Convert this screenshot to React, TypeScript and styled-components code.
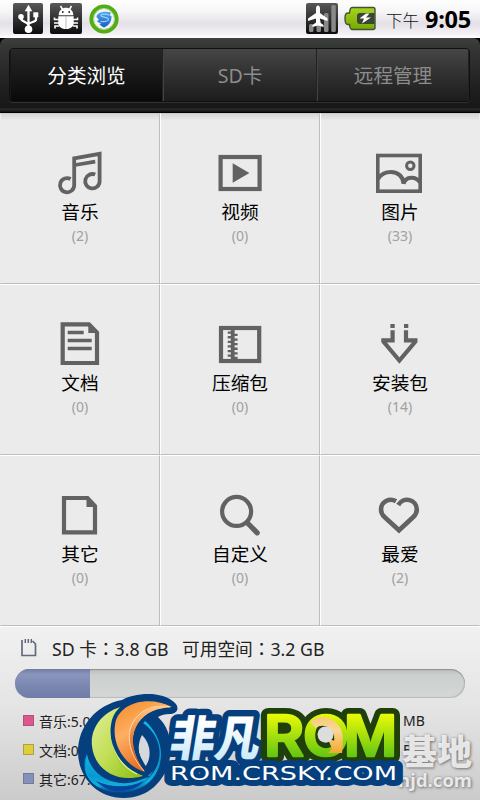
import React, { useState } from "react";
import styled, { createGlobalStyle } from "styled-components";

const GlobalStyle = createGlobalStyle`
  * {
    box-sizing: border-box;
  }
  body {
    margin: 0;
    background: #000;
    font-family: "Noto Sans", "Noto Sans CJK SC", sans-serif;
  }
`;

const Screen = styled.div`
  position: relative;
  width: 480px;
  height: 800px;
  overflow: hidden;
  display: flex;
  flex-direction: column;
  background: #000;
`;

const StatusBar = styled.header`
  height: 38px;
  flex: none;
  display: flex;
  align-items: flex-start;
  padding: 3px 8px 0 13px;
  background: linear-gradient(#fff 0%, #f6f5f7 30%, #e4e1e6 62%, #f3eff4 88%, #fff 100%);
`;

const StatusIcon = styled.svg<{ $gap?: number }>`
  flex: none;
  margin-right: ${(props) => props.$gap ?? 6}px;
`;

const Spacer = styled.div`
  flex: 1;
`;

const Meridiem = styled.span`
  font-family: "Noto Sans CJK SC", sans-serif;
  font-weight: 300;
  font-size: 16.5px;
  line-height: 35px;
  color: #111;
  width: 39px;
`;

const Clock = styled.span`
  font-family: "Open Sans", sans-serif;
  font-weight: 700;
  font-size: 23.5px;
  line-height: 33px;
  letter-spacing: -0.3px;
  color: #000;
  width: 47px;
`;

const TabBar = styled.nav`
  height: 75px;
  flex: none;
  padding: 10px 10px 11px 9px;
  border-radius: 7px 7px 0 0;
  border-bottom: 1px solid #000;
  background: linear-gradient(#3d3f3d 0%, #353735 12%, #262626 50%, #171717 94%, #2b2b2b 96%, #111 100%);
`;

const TabGroup = styled.div`
  display: grid;
  grid-template-columns: 153px 154px 1fr;
  height: 54px;
  border: 1px solid #101010;
  border-radius: 4px;
  overflow: hidden;
  box-shadow: 0 1px 0 #303030;
`;

const Tab = styled.button<{ $active: boolean }>`
  padding: 0 0 1px;
  border: 0;
  border-left: 1px solid ${(props) => (props.$active ? "#181818" : "#424242")};
  border-right: 1px solid #222;
  font-family: "Noto Sans", "Noto Sans CJK SC", sans-serif;
  font-size: 19.6px;
  color: ${(props) => (props.$active ? "#fff" : "#8c8c8c")};
  background: ${(props) =>
    props.$active
      ? "linear-gradient(#272727, #090909)"
      : "linear-gradient(#464646, #303030 50%, #1c1c1c)"};
`;

const Grid = styled.main`
  flex: none;
  display: grid;
  grid-template-columns: repeat(3, 160px);
  grid-auto-rows: 171px;
  background: #ebebeb;
`;

const Cell = styled.div`
  display: flex;
  flex-direction: column;
  align-items: center;
  padding-top: 36px;
  border-top: 1px solid #fff;
  border-left: 1px solid #fff;
  border-right: 1px solid #bdbdbd;
  border-bottom: 1px solid #bdbdbd;
  &:nth-child(3n + 1) {
    border-left-color: #ebebeb;
  }
  &:nth-child(3n) {
    border-right-color: #ebebeb;
  }
  &:nth-child(-n + 3) {
    border-top-color: #c9cbc8;
    background: linear-gradient(#d5d7d4, #ebebeb 7px);
  }
`;

const CellIcon = styled.svg`
  width: 48px;
  height: 48px;
  fill: none;
  stroke: #626262;
  stroke-width: 4.2;
`;

const CellLabel = styled.div`
  height: 27px;
  line-height: 27px;
  font-size: 18.7px;
  color: #000;
`;

const CellCount = styled.div`
  margin-top: 1px;
  height: 20px;
  line-height: 20px;
  font-size: 14px;
  color: #a0a0a0;
`;

const Storage = styled.footer`
  flex: 1;
  border-top: 1px solid #fff;
  background: linear-gradient(#f1f1f1, #e3e3e3 50%, #cbcbcb);
`;

// the TC face centres the full-width colon
const StorageTitle = styled.div`
  display: flex;
  align-items: center;
  height: 42px;
  padding: 0 0 1px 21px;
  font-family: "Noto Sans", "Noto Sans CJK TC", sans-serif;
  font-size: 17.7px;
  color: #222;
`;

const Total = styled.span`
  width: 130px;
  margin-left: 15px;
  white-space: nowrap;
`;

const Track = styled.div`
  height: 29px;
  margin: 0 15px;
  border-radius: 15px;
  overflow: hidden;
  background: linear-gradient(#b9bcbb, #cbcfce 20%, #d4d7d6);
  box-shadow: inset 0 1px 1px #8e9090, inset -1px -1px 1px #bbb;
`;

const Used = styled.div`
  height: 100%;
  background: linear-gradient(#6f7ba2, #8995bc 18%, #7985af 65%, #6f7ca7);
`;

const Legend = styled.ul`
  list-style: none;
  margin: 8px 0 0;
  padding: 0 0 0 23px;
`;

const LegendRow = styled.li`
  display: flex;
  align-items: center;
  height: 29px;
  font-size: 14px;
  color: #222;
`;

const Swatch = styled.i<{ $color: string }>`
  width: 11px;
  height: 11px;
  margin: -1px 5px 0 0;
  border: 1px solid rgba(80, 80, 80, 0.35);
  background: ${(props) => props.$color};
`;

const LegendText = styled.span`
  width: 364px;
`;

const Watermark = styled.div`
  position: absolute;
  right: 8px;
  bottom: 10px;
  text-align: right;
  color: rgba(255, 255, 255, 0.82);
  text-shadow: 1px 1px 3px #777, 0 0 2px #999;
`;

const WatermarkName = styled.div`
  font-family: "Noto Sans CJK SC", sans-serif;
  font-weight: 900;
  font-size: 35px;
  line-height: 40px;
`;

const WatermarkSite = styled.div`
  font-family: "Open Sans", sans-serif;
  font-weight: 700;
  font-size: 18.5px;
  line-height: 20px;
`;

const Brand = styled.svg`
  position: absolute;
  left: 70px;
  top: 690px;
`;

const icons: Record<string, React.ReactNode> = {
  music: (
    <>
      <path d="M14.6 29a7.1 7.1 0 1 0 3.6 6.2V8.4L43.6 3.8v27.4a7.2 7.2 0 1 1-4.4-6.6" strokeWidth="3.8" />
      <path d="M19 15l20.2-3.4" strokeWidth="3.6" />
    </>
  ),
  video: (
    <>
      <rect x="4.6" y="7" width="39" height="32" />
      <path d="M16.7 13.3v19.4L33.4 23z" fill="#626262" stroke="none" />
    </>
  ),
  image: (
    <>
      <rect x="1.8" y="5.5" width="42.4" height="35.7" strokeWidth="3.6" />
      <circle cx="34.3" cy="15.7" r="3.7" strokeWidth="3" />
      <path d="M2 29C5 24 10 22 15 22c7.5 0 12 5 12.5 11.5C30 26 40 26 44 32.5" />
    </>
  ),
  doc: (
    <>
      <path d="M6.7 3.3H33L41 11.5V42H6.7z" />
      <path d="M32.3 2v10H43z" fill="#626262" stroke="none" />
      <path d="M11.7 11.5h16M11.7 19.5h24M11.7 27.5h24" strokeWidth="3.3" />
    </>
  ),
  zip: (
    <>
      <rect x="5" y="7" width="38.2" height="33" />
      <path d="M16.7 7v33" strokeWidth="3.8" />
      <path d="M13.5 10.5v28" strokeWidth="3.6" strokeDasharray="2.3 2.3" />
      <path d="M19.8 12.8v26" strokeWidth="3.6" strokeDasharray="2.3 2.3" />
    </>
  ),
  install: (
    <>
      <path d="M16.6 9.3v10H7.4v1.2l16 19 16-19v-1.2H30v-10" />
      <path d="M14.4 5h4.3M28 5h4.3" />
    </>
  ),
  other: (
    <>
      <path d="M8 6h23.5L39 14v26.3H8z" />
      <path d="M30.5 5v10H41z" fill="#626262" stroke="none" />
    </>
  ),
  search: (
    <>
      <circle cx="20.6" cy="19.4" r="14.5" />
      <path d="M31.5 31l9.7 9.8" strokeWidth="5.2" strokeLinecap="round" />
    </>
  ),
  heart: (
    <path
      d="M20 9.3C13.5 5.5 5 9.5 5 17.5c0 3.5 1.5 5.7 3.5 7.5L23 38.3 37.3 25c2-1.9 3.5-4 3.5-7.5C40.8 8 28 3.5 22.2 13"
      strokeWidth="4.6"
    />
  ),
};

const categories = [
  { icon: "music", label: "音乐", count: 2 },
  { icon: "video", label: "视频", count: 0 },
  { icon: "image", label: "图片", count: 33 },
  { icon: "doc", label: "文档", count: 0 },
  { icon: "zip", label: "压缩包", count: 0 },
  { icon: "install", label: "安装包", count: 14 },
  { icon: "other", label: "其它", count: 0 },
  { icon: "search", label: "自定义", count: 0 },
  { icon: "heart", label: "最爱", count: 2 },
];

const legend = [
  { color: "#e0568c", text: "音乐:5.0", unit: "MB" },
  { color: "#dfcd3c", text: "文档:0", unit: "B" },
  { color: "#8691bb", text: "其它:67.", unit: "" },
];

const StatusIcons = () => (
  <>
    <StatusIcon width="30" height="31" viewBox="0 0 30 31" $gap={7}>
      <defs>
        <linearGradient id="tile" x1="0" y1="0" x2="0" y2="1">
          <stop offset="0" stopColor="#595959" />
          <stop offset="0.5" stopColor="#303030" />
          <stop offset="1" stopColor="#0c0c0c" />
        </linearGradient>
      </defs>
      <rect width="30" height="31" rx="2" fill="url(#tile)" />
      <g fill="none" stroke="#fff" strokeWidth="2.3">
        <path d="M15.5 6v20M8 13.5v2c0 3 7.5 3.5 7.5 7M23 12v4.5c0 3-7.5 2.5-7.5 5" />
      </g>
      <path d="M15.5 1.8l3.8 6.4h-7.6z" fill="#fff" />
      <circle cx="8" cy="13.7" r="2.8" fill="#fff" />
      <rect x="20.3" y="9.3" width="5" height="5" fill="#fff" />
      <circle cx="15.5" cy="26.2" r="3.8" fill="#fff" />
    </StatusIcon>
    <StatusIcon width="32" height="31" viewBox="0 0 32 31" $gap={7}>
      <rect width="32" height="31" rx="2" fill="url(#tile)" />
      <g fill="#fff">
        <path d="M8.7 12.3c0-10 14.6-10 14.6 0z" />
        <path d="M8.3 13.2h15.4V20c0 8-15.4 8-15.4 0z" />
      </g>
      <path
        d="M10.5 3l2.5 4M21.5 3L19 7M9 16.5H4.5v-2M9 20H4M9 23H5v2.5M23 16.5h4.5v-2M23 20h5M23 23h4v2.5"
        fill="none"
        stroke="#fff"
        strokeWidth="1.6"
      />
      <circle cx="12.8" cy="9" r="0.9" fill="#222" />
      <circle cx="19.2" cy="9" r="0.9" fill="#222" />
      <path d="M16 13.2v12.500" stroke="#aaa" strokeWidth="0.8" />
    </StatusIcon>
    <StatusIcon width="30" height="32" viewBox="0 0 30 32">
      <defs>
        <linearGradient id="swirl" x1="0" y1="0" x2="0" y2="1">
          <stop offset="0" stopColor="#4aa6ee" />
          <stop offset="1" stopColor="#1a5fc0" />
        </linearGradient>
      </defs>
      <circle cx="15" cy="16" r="12.4" fill="#f2f3f5" stroke="#52ad14" strokeWidth="4.4" />
      <circle cx="15" cy="16" r="10.5" fill="none" stroke="#b9d9a0" strokeWidth="1" />
      <path
        d="M7.500 14c0-4 7-6.500 14.500-4.500l-1.500 3 2 .5c0 6-2 9-7.500 11.500-2-.8-3.500-2-4.500-3.500l2-1c-2 0-3.500-.5-4.500-2l2-1z"
        fill="url(#swirl)"
      />
      <path d="M20 12c-4-1.500-8-1-8 .8 0 1.700 7 1 7.500 3.500.3 1.700-3.500 2.700-8 2.200" fill="none" stroke="#9ed2f8" strokeWidth="1.1" />
    </StatusIcon>
    <Spacer />
    <StatusIcon width="32" height="31" viewBox="0 0 32 31">
      <rect width="32" height="31" rx="2" fill="url(#tile)" />
      <g fill="#898989">
        <rect x="3" y="21" width="4.5" height="8" rx="1.5" />
        <rect x="10.5" y="17" width="4.5" height="12" rx="1.5" />
        <rect x="18" y="10" width="4.5" height="19" rx="1.5" />
        <rect x="25.3" y="2" width="4.5" height="27" rx="1.5" />
      </g>
      <path
        d="M12 2.5c1.4 0 2 1.5 2 3V10l7.5 5.5V18L14 15.5v4l3.5 2.5v2L12 22.5 6.5 24v-2l3.5-2.5v-4L2 18v-2.5L10 10V5.5c0-1.5.6-3 2-3z"
        fill="#fff"
      />
    </StatusIcon>
    <StatusIcon width="32" height="31" viewBox="0 0 32 31" $gap={10}>
      <defs>
        <linearGradient id="battery" x1="0" y1="0" x2="0" y2="1">
          <stop offset="0" stopColor="#a8d322" />
          <stop offset="1" stopColor="#76a900" />
        </linearGradient>
      </defs>
      <path
        d="M8 4.5h21q2 0 2 2v18q0 2-2 2H8q-2 0-2.500-5H3.500Q1 21 1 15.500T3.500 10h2Q6 4.500 8 4.500z"
        fill="url(#battery)"
        stroke="#43503a"
        strokeWidth="1.4"
      />
      <path d="M16 10h14.500v11H16q-3 0-3-3v-5q0-3 3-3z" fill="#3c4434" />
      <path d="M22 10.500l-6.500 5H20l-2 5 9-6h-5l3.500-4z" fill="#fff" />
    </StatusIcon>
  </>
);

const RomLetters = () => (
  <>
    <text x="264" y="756" textLength="40" lengthAdjust="spacingAndGlyphs">
      R
    </text>
    <text x="303" y="756" textLength="46" lengthAdjust="spacingAndGlyphs">
      O
    </text>
    <text x="344" y="756" textLength="53" lengthAdjust="spacingAndGlyphs">
      M
    </text>
  </>
);

const RomBrand = () => (
  <Brand width="340" height="110" viewBox="70 690 340 110">
    <defs>
      <linearGradient id="ring" x1="0" y1="0" x2="0" y2="1">
        <stop offset="0" stopColor="#10b9e8" />
        <stop offset="0.6" stopColor="#0798d0" />
        <stop offset="0.85" stopColor="#10b0de" />
        <stop offset="1" stopColor="#08469a" />
      </linearGradient>
      <linearGradient id="lime" x1="0" y1="0" x2="1" y2="1">
        <stop offset="0" stopColor="#e2ef98" />
        <stop offset="0.5" stopColor="#c2de55" />
        <stop offset="1" stopColor="#8abc12" />
      </linearGradient>
      <linearGradient id="orange" x1="0" y1="0" x2="0.5" y2="1">
        <stop offset="0" stopColor="#f28b28" />
        <stop offset="0.45" stopColor="#ffae62" />
        <stop offset="1" stopColor="#e0661a" />
      </linearGradient>
      <linearGradient id="orangeInner" x1="0" y1="0" x2="0" y2="1">
        <stop offset="0" stopColor="#ffc987" />
        <stop offset="0.4" stopColor="#f08a3c" />
        <stop offset="1" stopColor="#b94708" />
      </linearGradient>
      <linearGradient id="ice" x1="0" y1="0" x2="0" y2="1">
        <stop offset="0.3" stopColor="#fff" />
        <stop offset="1" stopColor="#bde4fa" />
      </linearGradient>
      <linearGradient id="green" x1="0" y1="714" x2="0" y2="757" gradientUnits="userSpaceOnUse">
        <stop offset="0" stopColor="#eafa08" />
        <stop offset="1" stopColor="#62c512" />
      </linearGradient>
      <linearGradient id="gold" x1="0" y1="714" x2="0" y2="754" gradientUnits="userSpaceOnUse">
        <stop offset="0" stopColor="#f7c678" />
        <stop offset="0.4" stopColor="#fcd894" />
        <stop offset="1" stopColor="#f3a52a" />
      </linearGradient>
    </defs>

    {/* globe */}
    <path
      d="M122 700C134 693 162 690 175 703c5 5 2 11-5 11-5 0-9 1-12 3 26 24 11 81-34 81-30 0-46-24-46-46 0-26 18-47 44-52z"
      fill="#053f7d"
    />
    <path
      d="M143 723c17 12 22 33 10 50-15 22-50 24-62 1-3-6-5-13-4-20-4 9-3 18 2 25 14 19 49 18 64-1 14-18 9-43-9-58z"
      fill="url(#ring)"
    />
    <path d="M87 754c3 16 16 27 33 29 14 1 26-4 33-12-10 23-54 27-64 7-3-7-4-15-2-24z" fill="url(#ring)" />
    <path d="M96 781c15 7 33 7 48 0-10 12-36 14-48 0z" fill="#07439a" />
    <path d="M142 735c9 9 10 23 3 32-6-8-9-21-3-32z" fill="#d5d9dc" />
    <path
      d="M125 706c-22 4-35 22-33 40 2 22 23 38 51 30-28-14-33-42-18-70z"
      fill="url(#lime)"
      stroke="#053f7d"
      strokeWidth="5"
      paintOrder="stroke"
    />
    <path d="M123 709c-18 20-12 53 20 67-24-2-42-32-20-67z" fill="#9bc922" />
    <path d="M117 717c-11 24-1 47 20 57" fill="none" stroke="#e4f2a0" strokeWidth="1.2" />
    <path
      d="M172 707c-23-12-54-5-57 18-3 20 10 41 30 47-13-18-16-35-7-49 8-11 19-15 34-16z"
      fill="url(#orange)"
      stroke="#053f7d"
      strokeWidth="8"
      strokeLinejoin="round"
      paintOrder="stroke"
    />
    <path d="M171 707c-20-3-37 8-41 24-3 16 5 31 15 41-13-18-16-35-7-49 8-11 18-15 33-16z" fill="url(#orangeInner)" />
    <path d="M170 707c-20-4-36 7-40 23-3 15 4 30 14 41" fill="none" stroke="#ffe0b8" strokeWidth="0.9" />

    {/* name */}
    <g
      fontFamily="Noto Sans CJK SC, sans-serif"
      fontWeight="900"
      fontSize="48"
      transform="translate(172 756) skewX(-9)"
      stroke="#053f7d"
      strokeLinejoin="round"
      paintOrder="stroke"
    >
      <text x="-4" y="0" textLength="90" lengthAdjust="spacingAndGlyphs" fill="url(#ice)" strokeWidth="13">
        非凡
      </text>
    </g>
    <g fontFamily="Inter, sans-serif" fontWeight="600" fontSize="56" strokeLinejoin="round">
      <g fill="#20400b" stroke="#20400b" strokeWidth="14">
        <RomLetters />
      </g>
      <g fill="url(#green)" stroke="url(#green)" strokeWidth="2.6">
        <RomLetters />
      </g>
    </g>
    {/* arrow that turns the O into a Q */}
    <path d="M313 725A16 17 0 0 1 337 746" fill="none" stroke="url(#gold)" strokeWidth="8.5" />
    <path d="M328 739l15 4-1 10-14 0 4-4z" fill="url(#gold)" />
    <circle cx="325.5" cy="734.5" r="8" fill="#ddd" />
    <text
      x="170"
      y="780"
      fontFamily="DejaVu Sans, sans-serif"
      fontSize="19.5"
      textLength="227"
      lengthAdjust="spacingAndGlyphs"
      fill="#fff"
      stroke="#053f7d"
      strokeWidth="12"
      strokeLinejoin="round"
      paintOrder="stroke"
    >
      ROM.CRSKY.COM
    </text>
  </Brand>
);

const tabs = ["分类浏览", "SD卡", "远程管理"];

export default function App() {
  const [active, setActive] = useState(0);
  return (
    <>
      <GlobalStyle />
      <Screen>
        <StatusBar>
          <StatusIcons />
          <Meridiem>下午</Meridiem>
          <Clock>9:05</Clock>
        </StatusBar>
        <TabBar>
          <TabGroup>
            {tabs.map((tab, i) => (
              <Tab key={tab} $active={i === active} onClick={() => setActive(i)}>
                {tab}
              </Tab>
            ))}
          </TabGroup>
        </TabBar>
        <Grid>
          {categories.map((item) => (
            <Cell key={item.icon}>
              <CellIcon viewBox="0 0 48 48">{icons[item.icon]}</CellIcon>
              <CellLabel>{item.label}</CellLabel>
              <CellCount>({item.count})</CellCount>
            </Cell>
          ))}
        </Grid>
        <Storage>
          <StorageTitle>
            <svg width="16" height="18" viewBox="0 0 16 18" fill="none" stroke="#626a7c" strokeWidth="1.7">
              <path d="M1 1v15.5h13.5V5l-3-3" />
              <path d="M4.3 0v4M7.3 0v4M10.3 0v4" strokeWidth="1.5" />
            </svg>
            <Total>SD 卡：3.8 GB</Total>
            <span>可用空间：3.2 GB</span>
          </StorageTitle>
          <Track>
            <Used style={{ width: `${(75 / 450) * 100}%` }} />
          </Track>
          <Legend>
            {legend.map((row) => (
              <LegendRow key={row.color}>
                <Swatch $color={row.color} />
                <LegendText>{row.text}</LegendText>
                <span>{row.unit}</span>
              </LegendRow>
            ))}
          </Legend>
        </Storage>
        <Watermark>
          <WatermarkName>基地</WatermarkName>
          <WatermarkSite>njd.com</WatermarkSite>
        </Watermark>
        <RomBrand />
      </Screen>
    </>
  );
}
